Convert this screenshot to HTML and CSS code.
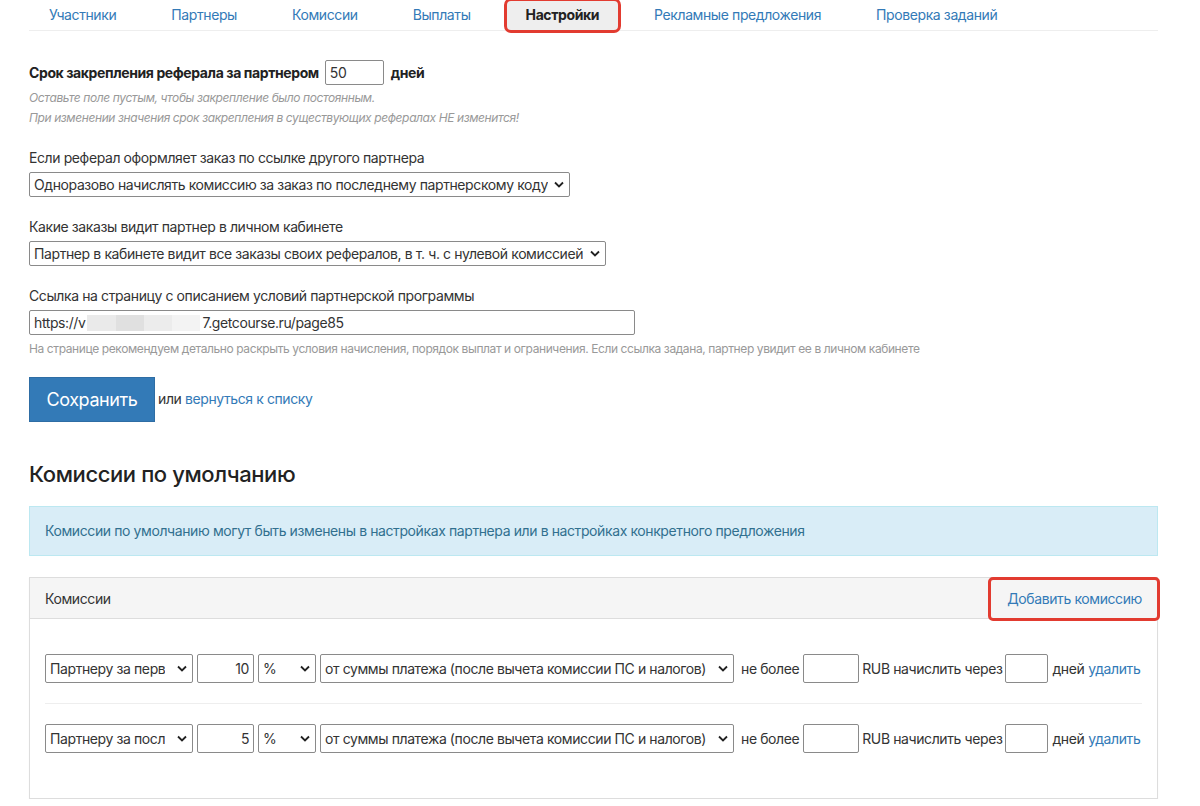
FILE: index.html
```html
<!DOCTYPE html>
<html lang="ru">
<head>
<meta charset="utf-8">
<title>Настройки</title>
<link rel="stylesheet" href="styles.css">
</head>
<body>
<div class="page">
  <nav class="tabs">
    <a class="tab">Участники</a>
    <a class="tab">Партнеры</a>
    <a class="tab">Комиссии</a>
    <a class="tab">Выплаты</a>
    <a class="tab active">Настройки</a>
    <a class="tab">Рекламные предложения</a>
    <a class="tab">Проверка заданий</a>
  </nav>

  <div class="term-row">
    <b>Срок закрепления реферала за партнером</b>
    <input class="txt term-input" type="text" value="50">
    <b class="days">дней</b>
  </div>
  <div class="hint-i">Оставьте поле пустым, чтобы закрепление было постоянным.</div>
  <div class="hint-i">При изменении значения срок закрепления в существующих рефералах НЕ изменится!</div>

  <div class="group">
    <div class="label">Если реферал оформляет заказ по ссылке другого партнера</div>
    <div class="sel sel-a"><span>Одноразово начислять комиссию за заказ по последнему партнерскому коду</span><svg class="chev" viewBox="0 0 10 6"><path d="M1 1l4 4 4-4"/></svg></div>
  </div>

  <div class="group">
    <div class="label">Какие заказы видит партнер в личном кабинете</div>
    <div class="sel sel-b"><span>Партнер в кабинете видит все заказы своих рефералов, в т. ч. с нулевой комиссией</span><svg class="chev" viewBox="0 0 10 6"><path d="M1 1l4 4 4-4"/></svg></div>
  </div>

  <div class="group">
    <div class="label">Ссылка на страницу с описанием условий партнерской программы</div>
    <div class="txt url-input"><span>https://v</span><span class="blur"><i></i><i></i><i></i><i></i></span><span>7.getcourse.ru/page85</span></div>
    <div class="hint">На странице рекомендуем детально раскрыть условия начисления, порядок выплат и ограничения. Если ссылка задана, партнер увидит ее в личном кабинете</div>
  </div>

  <div class="actions">
    <button class="btn-save">Сохранить</button>
    <span class="or">или <a class="link">вернуться к списку</a></span>
  </div>

  <h2 class="title">Комиссии по умолчанию</h2>

  <div class="alert">Комиссии по умолчанию могут быть изменены в настройках партнера или в настройках конкретного предложения</div>

  <div class="panel">
    <div class="panel-head">
      <span>Комиссии</span>
      <a class="link add">Добавить комиссию</a>
    </div>
    <div class="panel-body">
      <div class="crow">
        <div class="sel s1"><span>Партнеру за перв</span><svg class="chev" viewBox="0 0 10 6"><path d="M1 1l4 4 4-4"/></svg></div>
        <div class="txt num">10</div>
        <div class="sel s2"><span>%</span><svg class="chev" viewBox="0 0 10 6"><path d="M1 1l4 4 4-4"/></svg></div>
        <div class="sel s3"><span>от суммы платежа (после вычета комиссии ПС и налогов)</span><svg class="chev" viewBox="0 0 10 6"><path d="M1 1l4 4 4-4"/></svg></div>
        <span class="w1">не более</span>
        <div class="txt i1"></div>
        <span>RUB начислить через</span>
        <div class="txt i2"></div>
        <span>дней</span>
        <a class="link">удалить</a>
      </div>
      <div class="crow">
        <div class="sel s1"><span>Партнеру за посл</span><svg class="chev" viewBox="0 0 10 6"><path d="M1 1l4 4 4-4"/></svg></div>
        <div class="txt num">5</div>
        <div class="sel s2"><span>%</span><svg class="chev" viewBox="0 0 10 6"><path d="M1 1l4 4 4-4"/></svg></div>
        <div class="sel s3"><span>от суммы платежа (после вычета комиссии ПС и налогов)</span><svg class="chev" viewBox="0 0 10 6"><path d="M1 1l4 4 4-4"/></svg></div>
        <span class="w1">не более</span>
        <div class="txt i1"></div>
        <span>RUB начислить через</span>
        <div class="txt i2"></div>
        <span>дней</span>
        <a class="link">удалить</a>
      </div>
    </div>
  </div>
</div>
</body>
</html>
```

FILE: styles.css
```css
* { box-sizing: border-box; }
html, body { margin: 0; background: #fff; }
body {
  font-family: Inter, "Noto Sans", sans-serif;
  font-size: 14px;
  color: #333;
  letter-spacing: -0.4px;
}
.page { width: 1129px; margin-left: 29px; }

.tabs {
  display: flex;
  gap: 15px;
  height: 31px;
  border-bottom: 1px solid #eee;
}
.tab {
  padding: 0 20px;
  line-height: 30px;
  color: #337ab7;
  white-space: nowrap;
}
.tab.active {
  color: #222;
  font-weight: 700;
  background: #eee;
  outline: 3px solid #e23b30;
  outline-offset: -1px;
  border-radius: 5px;
  height: 31px;
}

.term-row {
  display: flex;
  align-items: center;
  margin-top: 29px;
  height: 25px;
}
.term-row b { font-weight: 700; color: #222; }
.term-input { width: 59px; height: 25px; margin-left: 6px; margin-right: 7px; letter-spacing: -0.4px; }

.hint-i {
  font-size: 12px;
  line-height: 20px;
  font-style: italic;
  color: #999;
}
.term-row + .hint-i { margin-top: 3px; }

.group { margin-top: 20px; }
.label { line-height: 20px; margin-bottom: 4px; color: #333; }

.txt {
  display: flex;
  align-items: center;
  border: 1px solid #8a8a8a;
  border-radius: 2px;
  padding: 0 4px;
  font: inherit;
  color: #333;
  background: #fff;
  white-space: nowrap;
}
input.txt { outline: none; }

.sel {
  display: flex;
  align-items: center;
  justify-content: space-between;
  border: 1px solid #8a8a8a;
  border-radius: 2px;
  padding: 0 5px 0 4px;
  height: 25px;
  background: #fff;
  white-space: nowrap;
  overflow: hidden;
  color: #333;
}
.sel span { overflow: hidden; }
.chev {
  width: 10px;
  height: 7px;
  flex: none;
  margin-left: 5px;
  fill: none;
  stroke: #222;
  stroke-width: 1.8;
}
.sel-a { width: 541px; }
.sel-b { width: 577px; }

.url-input { width: 606px; height: 25px; }
.blur { display: inline-flex; width: 113px; height: 16px; margin: 0 2px; }
.blur i { flex: 1; background: #eaeaea; }
.blur i:nth-child(2) { background: #e0e0e0; }
.blur i:nth-child(3) { background: #ececec; }
.blur i:nth-child(4) { background: #f3f3f3; }

.hint {
  font-size: 12px;
  line-height: 20px;
  color: #999;
  margin-top: 4px;
}

.actions {
  display: flex;
  align-items: center;
  margin-top: 18px;
}
.btn-save {
  width: 126px;
  height: 45px;
  background: #337ab7;
  border: 1px solid #2e6da4;
  color: #fff;
  font-family: inherit;
  font-size: 18px;
  letter-spacing: -0.4px;
  padding: 0;
}
.or { margin-left: 3px; margin-top: -2px; }
.link { color: #337ab7; }

.title {
  margin: 37px 0 0;
  font-size: 22px;
  line-height: 30px;
  font-weight: 500;
  color: #222;
}

.alert {
  margin-top: 17px;
  background: #d9edf7;
  border: 1px solid #bce8f1;
  color: #31708f;
  padding: 14px 15px;
  line-height: 20px;
}

.panel {
  margin-top: 21px;
  border: 1px solid #ddd;
  box-shadow: 0 1px 1px rgba(0,0,0,.05);
}
.panel-head {
  display: flex;
  justify-content: space-between;
  align-items: center;
  height: 41px;
  background: #f5f5f5;
  border-bottom: 1px solid #ddd;
  padding: 0 15px;
}
.panel-head .add {
  position: relative;
}
.panel-head .add::after {
  content: "";
  position: absolute;
  left: -19px;
  right: -18px;
  top: -13px;
  bottom: -14px;
  border: 3px solid #e23b30;
  border-radius: 5px;
}
.panel-body { padding: 14px 15px 25px; }

.crow {
  display: flex;
  align-items: center;
  height: 70px;
  white-space: nowrap;
}
.crow + .crow { border-top: 1px solid #eee; }
.crow .sel, .crow .txt { height: 29px; }
.crow > * { flex: none; }
.s1 { width: 148px; margin-right: 4px; }
.num { width: 57px; justify-content: flex-end; margin-right: 4px; }
.s2 { width: 58px; margin-right: 4px; }
.s3 { width: 414px; }
.w1 { margin-left: 7px; margin-right: 4px; }
.i1 { width: 56px; margin-right: 3px; }
.i2 { width: 43px; margin-left: 3px; margin-right: 4px; }
.crow .link { margin-left: 4px; }
```
